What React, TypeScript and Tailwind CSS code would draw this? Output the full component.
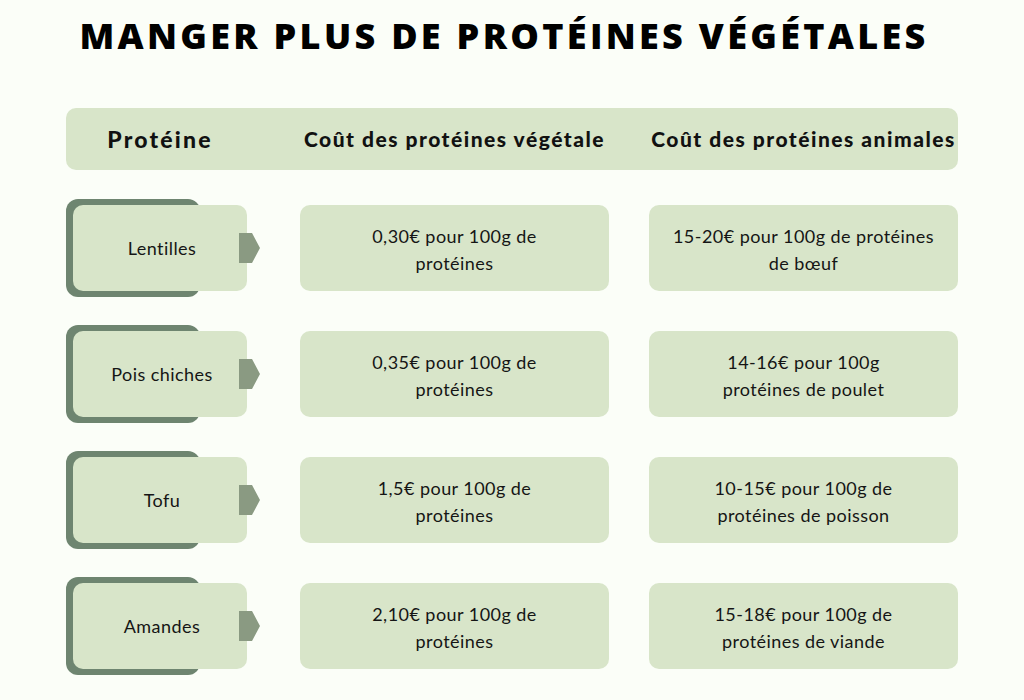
const rows = [
  {
    name: "Lentilles",
    veg: ["0,30€ pour 100g de", "protéines"],
    ani: ["15-20€ pour 100g de protéines", "de bœuf"],
  },
  {
    name: "Pois chiches",
    veg: ["0,35€ pour 100g de", "protéines"],
    ani: ["14-16€ pour 100g", "protéines de poulet"],
  },
  {
    name: "Tofu",
    veg: ["1,5€ pour 100g de", "protéines"],
    ani: ["10-15€ pour 100g de", "protéines de poisson"],
  },
  {
    name: "Amandes",
    veg: ["2,10€ pour 100g de", "protéines"],
    ani: ["15-18€ pour 100g de", "protéines de viande"],
  },
]

function Card({ lines }: { lines: string[] }) {
  return (
    <div className="h-[86px] rounded-[10px] bg-[#d8e5c9] flex flex-col items-center justify-center pt-[3px] text-[18px] leading-[27px] tracking-[0.45px] text-[#151515] text-center">
      {lines.map((l) => (
        <span key={l} className="whitespace-nowrap">{l}</span>
      ))}
    </div>
  )
}

function NameCell({ name }: { name: string }) {
  return (
    <div className="relative h-[98px]">
      <div className="w-[134px] h-[98px] rounded-[12px] bg-[#6e8570] pl-[7px] pt-[6px]">
        <div className="w-[174px] h-[86px] rounded-[10px] bg-[#d8e5c9] flex items-center justify-center pl-[4px] text-[18px] tracking-[0.45px] text-[#151515]">
          {name}
        </div>
      </div>
      <svg className="absolute left-[173px] top-[34px]" width="21" height="30" viewBox="0 0 21 30">
        <polygon points="0,0 13,0 21,15 13,30 0,30" fill="#8a9a82" />
      </svg>
    </div>
  )
}

export default function App() {
  return (
    <div className="w-[1024px] h-[700px] bg-[#fbfef8] overflow-hidden" style={{ fontFamily: "Lato, 'Open Sans', sans-serif" }}>
      <h1
        className="pt-[13px] pr-[16px] text-center text-[36px] leading-[46px] font-extrabold tracking-[3.3px] text-black whitespace-nowrap"
        style={{ fontFamily: "'Open Sans', Lato, sans-serif" }}
      >
        MANGER PLUS DE PROTÉINES VÉGÉTALES
      </h1>

      <div className="px-[66px] mt-[49px]">
        <div className="h-[62px] rounded-[10px] bg-[#d8e5c9] grid grid-cols-[194px_309px_309px] gap-x-10 items-center font-black text-[#111]">
          <div className="pl-[7px] w-[181px] text-center text-[23px] tracking-[2.2px]">Protéine</div>
          <div className="text-center text-[21px] tracking-[1.5px] whitespace-nowrap">Coût des protéines végétale</div>
          <div className="text-center text-[21px] tracking-[1.5px] whitespace-nowrap">Coût des protéines animales</div>
        </div>

        <div className="mt-[29px] grid grid-cols-[194px_309px_309px] gap-x-10 gap-y-[28px] items-center">
          {rows.map((r) => (
            <div key={r.name} className="contents">
              <NameCell name={r.name} />
              <Card lines={r.veg} />
              <Card lines={r.ani} />
            </div>
          ))}
        </div>
      </div>
    </div>
  )
}
